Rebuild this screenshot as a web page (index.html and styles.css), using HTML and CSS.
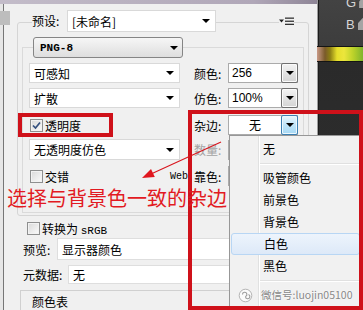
FILE: index.html
```html
<!DOCTYPE html>
<html lang="zh-CN">
  <head>
    <meta charset="UTF-8" />
    <title>存储为 Web 所用格式</title>
    <link rel="stylesheet" href="styles.css">
  </head>
  <body>
    <div class="screen">
      <div class="dialog">
        <div class="titlebar"></div>
        <div class="dlg-main">
          <div class="edge"><div class="edge-tab"></div></div>
          <div class="content">
            <div class="group">
              <div class="preset-row">
                <span class="preset-lbl">预设:</span>
                <div class="combo preset-combo"><span>[未命名]</span><i class="arrow"></i></div>
                <svg class="opts-icon" width="15" height="9" viewBox="0 0 15 9">
                  <polygon points="0,2.5 5,2.5 2.5,5.5" fill="#222" />
                  <rect x="6" y="0.5" width="9" height="1.3" fill="#333" />
                  <rect x="6" y="3.6" width="9" height="1.3" fill="#333" />
                  <rect x="6" y="6.7" width="9" height="1.3" fill="#333" />
                </svg>
              </div>
              <div class="inner">
                <div class="format-btn"><span>PNG-8</span><i class="arrow"></i></div>

                <div class="row r-std">
                  <div class="cell"><div class="combo wide"><span>可感知</span><i class="arrow"></i></div></div>
                  <span class="side-lbl">颜色:</span>
                  <div class="spin"><span>256</span><b class="spin-btn"><i class="arrow"></i></b></div>
                </div>

                <div class="row r-std">
                  <div class="cell"><div class="combo wide"><span>扩散</span><i class="arrow"></i></div></div>
                  <span class="side-lbl">仿色:</span>
                  <div class="spin"><span>100%</span><b class="spin-btn"><i class="arrow"></i></b></div>
                </div>

                <div class="row r-check">
                  <div class="cell">
                    <span class="check on">
                      <svg width="11" height="11" viewBox="0 0 11 11"><path d="M2 5.5 L4.5 8 L9 2.5" fill="none" stroke="#34507f" stroke-width="1.7" /></svg>
                    </span>
                    <span class="check-text">透明度</span>
                  </div>
                  <span class="side-lbl">杂边:</span>
                  <div class="spin matte"><span class="center">无</span><b class="spin-btn blue"><i class="arrow"></i></b></div>
                </div>

                <div class="row r-tdither">
                  <div class="cell"><div class="combo wide"><span>无透明度仿色</span><i class="arrow"></i></div></div>
                  <span class="side-lbl off">数量:</span>
                  <div class="spin"><span></span></div>
                </div>

                <div class="row r-web">
                  <div class="cell">
                    <span class="check"></span>
                    <span class="check-text">交错</span>
                    <span class="web">Web</span>
                  </div>
                  <span class="side-lbl">靠色:</span>
                  <div class="spin"><span></span></div>
                </div>
              </div>
            </div>

            <div class="srgb-row">
              <span class="check"></span>
              <span class="check-text">转换为 <span class="mono">sRGB</span></span>
            </div>

            <div class="field-row preview">
              <span class="field-lbl">预览:</span>
              <div class="field">显示器颜色</div>
            </div>

            <div class="field-row meta">
              <span class="field-lbl">元数据:</span>
              <div class="field">无</div>
            </div>

            <div class="table-group"><span>颜色表</span></div>
          </div>
        </div>
      </div>

      <div class="side">
        <div class="chan first"><span>G</span><i class="thumb"></i></div>
        <div class="chan"><span>B</span><i class="thumb"></i></div>
        <div class="ramp"></div>
      </div>

      <div class="menu">
        <div class="menu-item">无</div>
        <div class="menu-sep"></div>
        <div class="menu-item">吸管颜色</div>
        <div class="menu-item">前景色</div>
        <div class="menu-item">背景色</div>
        <div class="menu-item active">白色</div>
        <div class="menu-item">黑色</div>
        <div class="menu-sep"></div>
        <div class="menu-item watermark">
          <svg width="15" height="15" viewBox="0 0 15 15">
            <circle cx="7.5" cy="7.5" r="6.3" fill="#fbfbfb" stroke="#b5b5b5" stroke-width="1" />
            <path d="M4.5 6.5 a2.2 2.2 0 1 1 3 2 M7.5 8.5 a2.2 2.2 0 1 0 3 -2" fill="none" stroke="#9a9a9a" stroke-width="1.1" />
          </svg>
          <span>微信号:luojin05100</span>
        </div>
      </div>

      <div class="mark mark-small"></div>
      <div class="mark mark-big"></div>

      <svg class="pointer" width="363" height="310" viewBox="0 0 363 310">
        <line x1="221" y1="142" x2="151" y2="174" stroke="#d8141c" stroke-width="1.2" />
        <polygon points="142,178 151,168.9 154.8,177.1" fill="#e0161e" />
      </svg>

      <div class="note">选择与背景色一致的杂边</div>
    </div>
  </body>
</html>
```

FILE: styles.css
```css
* {
  box-sizing: border-box;
}
body {
  margin: 0;
  font-family: "Noto Sans CJK SC", sans-serif;
  font-size: 12px;
  color: #000;
}
.screen {
  position: relative;
  width: 363px;
  height: 310px;
  overflow: hidden;
  display: flex;
  background: #2d2d2d;
}

/* dialog */
.dialog {
  width: 318px;
  height: 310px;
  flex: none;
  display: flex;
  flex-direction: column;
  background: #f0f0f0;
  border-right: 1px solid #9d9d9d;
}
.titlebar {
  height: 4px;
  flex: none;
  background: linear-gradient(90deg, #c3bcc9, #b0a7b8 80%, #8e8596);
}
.dlg-main {
  flex: 1;
  display: flex;
}
.edge {
  width: 4px;
  flex: none;
  background: #e6e6e6;
  border-right: 1px solid #767676;
}
.edge-tab {
  width: 10px;
  height: 14px;
  margin-top: 7px;
  background: #bdbdbd;
}
.content {
  flex: 1;
  min-width: 0;
}

.group {
  width: 292px;
  margin: 18px 0 0 13px;
  padding-bottom: 2px;
  border: 1px solid #d5d5d5;
  border-radius: 3px;
}
.preset-row {
  display: flex;
  align-items: center;
  height: 22px;
  margin-top: -13px;
}
.preset-lbl {
  width: 35px;
  margin-left: 14px;
  line-height: 22px;
  background: #f0f0f0;
}
.combo {
  display: flex;
  align-items: center;
  justify-content: space-between;
  background: #fff;
  border: 1px solid #d9d9d9;
  padding: 0 5px 0 4px;
}
.preset-combo {
  width: 149px;
  height: 22px;
}
.opts-icon {
  margin-left: 63px;
  background: #f0f0f0;
}
.arrow {
  width: 0;
  height: 0;
  border-left: 4px solid transparent;
  border-right: 4px solid transparent;
  border-top: 4px solid #000;
}

.inner {
  width: 282px;
  margin: 15px 0 0 4px;
  padding-bottom: 25px;
  border: 1px solid #dadada;
}
.format-btn {
  display: flex;
  align-items: center;
  justify-content: space-between;
  width: 150px;
  height: 21px;
  margin: -11px 0 0 10px;
  padding: 0 4px 0 6px;
  border: 1px solid #858585;
  border-radius: 3px;
  background: linear-gradient(#f6f6f6, #dedede);
  font-family: "Liberation Mono", monospace;
  font-size: 11px;
  font-weight: bold;
}

.row {
  display: flex;
  align-items: center;
}
.r-std {
  height: 20px;
  margin-top: 5px;
}
.r-check {
  height: 24px;
  margin-top: 5px;
}
.r-tdither {
  height: 21px;
  margin-top: 2px;
}
.r-web {
  height: 22px;
  margin-top: 5px;
}
.cell {
  width: 151px;
  height: 100%;
  margin-left: 6px;
  display: flex;
  align-items: center;
}
.combo.wide {
  width: 151px;
  height: 100%;
}
.side-lbl {
  width: 34px;
  margin-left: 14px;
}
.side-lbl.off {
  color: #a3a3a3;
}
.spin {
  display: flex;
  width: 70px;
  height: 20px;
  background: #fff;
  border: 1px solid #ababab;
}
.spin span {
  flex: 1;
  padding-left: 3px;
  font-family: "Liberation Sans", sans-serif;
  font-size: 12px;
  line-height: 18px;
}
.spin span.center {
  text-align: center;
  font-family: "Noto Sans CJK SC", sans-serif;
  padding-left: 0;
}
.spin-btn {
  display: flex;
  align-items: center;
  justify-content: center;
  width: 17px;
  margin: -1px -1px -1px 0;
  border: 1px solid #707070;
  border-radius: 2px;
  background: linear-gradient(#f3f3f3, #d4d4d4);
  box-shadow: inset 0 0 0 1px #fafafa;
}
.spin-btn.blue {
  border-color: #3c7fb1;
  background: linear-gradient(#e8f6fd, #bfe4f8 50%, #a7d9f5);
  box-shadow: inset 0 0 0 1px #ecf7fd;
}
.matte {
  width: 70px;
}

.check {
  display: flex;
  align-items: center;
  justify-content: center;
  width: 13px;
  height: 13px;
  flex: none;
  margin-left: 1px;
  border: 1px solid #8e8f8f;
  background: linear-gradient(135deg, #d9d9d9, #fbfbfb);
  box-shadow: inset 0 0 0 1px #f2f2f2;
}
.check-text {
  margin-left: 2px;
}
.web {
  margin-left: auto;
  margin-right: -8px;
  font-family: "Liberation Mono", monospace;
  font-size: 10px;
}
.mono {
  font-family: "Liberation Mono", monospace;
  font-size: 11px;
}

.srgb-row {
  display: flex;
  align-items: center;
  height: 16px;
  margin: 4px 0 0 22px;
}
.field-row {
  display: flex;
  align-items: center;
  margin-left: 19px;
}
.preview {
  height: 22px;
  margin-top: 2px;
}
.meta {
  height: 19px;
  margin-top: 5px;
}
.field-lbl {
  width: 34px;
}
.meta .field-lbl {
  width: 45px;
}
.field {
  height: 100%;
  display: flex;
  align-items: center;
  padding-left: 4px;
  background: #fff;
  border: 1px solid #dedede;
}
.preview .field {
  width: 243px;
}
.meta .field {
  width: 232px;
}
.table-group {
  width: 289px;
  height: 30px;
  margin: 6px 0 0 16px;
  padding: 4px 0 0 11px;
  border-top: 1px solid #d0d0d0;
  border-left: 1px solid #d0d0d0;
  line-height: 14px;
}

/* right panel */
.side {
  flex: 1;
  display: flex;
  flex-direction: column;
  background: linear-gradient(#434343, #3d3d3d 45px, #2a2a2a 63px, #303030);
  border-left: 1px solid #1c1c1c;
}
.chan {
  display: flex;
  align-items: center;
  height: 22px;
  padding-left: 27px;
  color: #d6d6d6;
  font-family: "Liberation Sans", sans-serif;
  font-size: 13px;
}
.chan.first {
  margin-top: -9px;
}
.thumb {
  width: 10px;
  height: 12px;
  margin-left: 3px;
  background: #a4a4a4;
  clip-path: polygon(50% 0, 100% 45%, 100% 100%, 0 100%, 0 45%);
}
.ramp {
  height: 16px;
  margin: 11px 0 0 -2px;
  border-top: 1px solid #141414;
  border-bottom: 1px solid #141414;
  background: linear-gradient(90deg, #c99a88 0, #7a5a2a 8px, #8c7e14 13px, #e6df2c 20px, #ece63c 27px, #bcd22a 36px, #7fb42c 46px);
}

/* dropdown list of the matte combo */
.menu {
  position: absolute;
  left: 229px;
  top: 135px;
  width: 132px;
  height: 180px;
  padding-top: 2px;
  background: #f1f1f1;
  border: 1px solid #979797;
}
.menu::before {
  content: "";
  position: absolute;
  left: 28px;
  top: 0;
  bottom: 0;
  width: 1px;
  background: #e0e1e1;
  box-shadow: 1px 0 #fff;
}
.menu-item {
  position: relative;
  height: 22px;
  line-height: 22px;
  padding-left: 33px;
}
.menu-item.active {
  margin: 0 0 0 1px;
  padding-left: 32px;
  line-height: 20px;
  border: 1px solid #b8d6f4;
  border-radius: 3px;
  background: linear-gradient(#edf4fc, #dde9f8);
}
.menu-sep {
  height: 7px;
  margin-left: 29px;
  padding-top: 3px;
}
.menu-sep::after {
  content: "";
  display: block;
  border-top: 1px solid #e0e0e0;
  border-bottom: 1px solid #fff;
}
.watermark {
  display: flex;
  align-items: center;
  padding-left: 8px;
  color: #878787;
  font-size: 10.5px;
  white-space: nowrap;
  text-shadow: 0 0 2px #fff, 0 0 1px #fff;
}
.watermark span {
  margin-left: 8px;
}

/* annotations */
.mark {
  position: absolute;
  border: 4px solid #cf111a;
}
.mark-small {
  left: 18px;
  top: 113px;
  width: 95px;
  height: 24px;
}
.mark-big {
  left: 188px;
  top: 110px;
  width: 175px;
  height: 200px;
}
.pointer {
  position: absolute;
  left: 0;
  top: 0;
}
.note {
  position: absolute;
  left: 7px;
  top: 186px;
  font-size: 20px;
  line-height: 24px;
  color: #e21a22;
  white-space: nowrap;
}
```
